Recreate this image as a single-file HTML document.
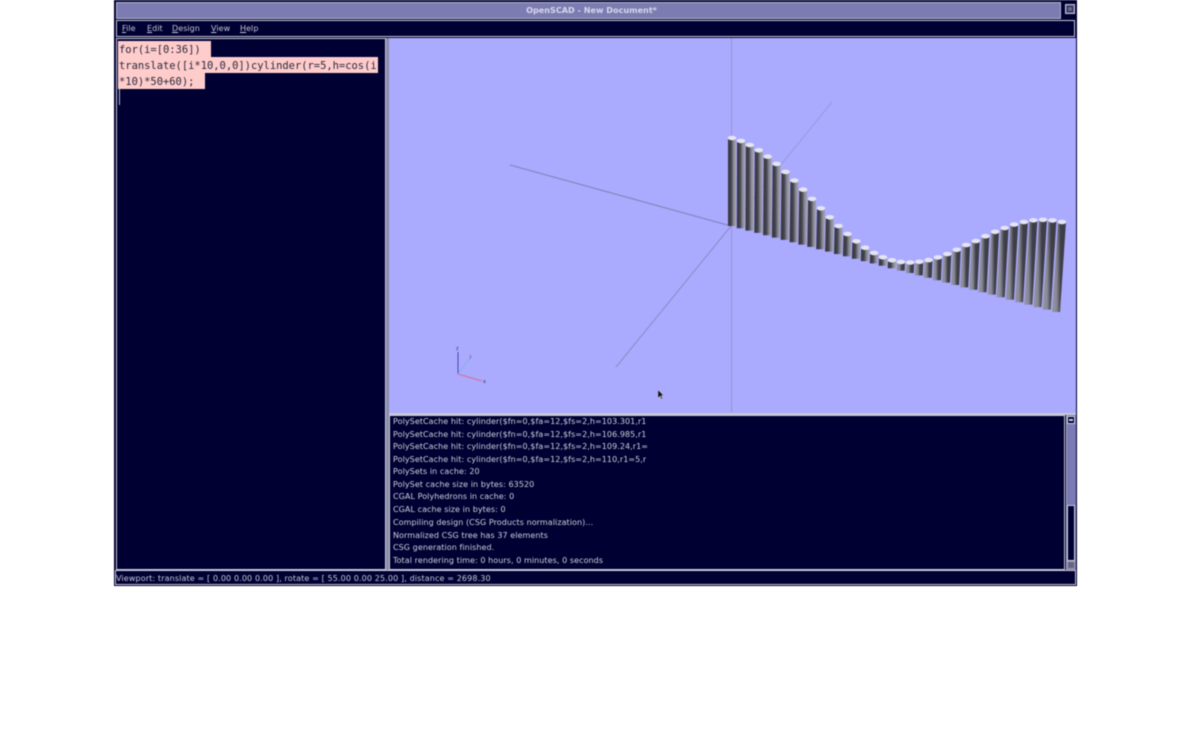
<!DOCTYPE html>
<html><head><meta charset="utf-8"><style>
html,body{margin:0;padding:0;background:#fff;width:1190px;height:732px;overflow:hidden}
#w{position:absolute;left:0;top:0;width:1190px;height:732px;filter:blur(.6px)}
#w div{position:absolute;box-sizing:border-box;white-space:nowrap}
.b{background:#000033;border:1px solid #c8c8d8}
.c{left:393px;font:8px/12px "DejaVu Sans",sans-serif;color:#d0d0dc;letter-spacing:.07px;margin-top:1px}
.m{top:23px;font:8px/12px "DejaVu Sans",sans-serif;color:#c4c4d4;letter-spacing:.05px}
.m u{text-decoration:underline}
.e{left:118px;font:10.45px/18px "DejaVu Sans Mono",monospace;color:#2a2a3a;background:#ffcccc;padding-left:1px;overflow:hidden}
</style></head><body><div id="w">
<div style="left:114px;top:0;width:963px;height:586px;background:#000033"></div>
<div style="left:116px;top:2px;width:945px;height:17px;background:#7c7cb2;border:1px solid #b4b4cc"></div>
<div style="left:119px;top:4px;width:945px;text-align:center;font:bold 8.1px/13px 'DejaVu Sans',sans-serif;color:#d8d8ea">OpenSCAD - New Document*</div>
<div style="left:1065px;top:4px;width:10px;height:10px;background:#6c6c90;border:1px solid #c0c0d4"></div>
<div style="left:1067px;top:6px;width:6px;height:6px;border:1px solid #20204a"></div>
<div class="b" style="left:116px;top:20px;width:959px;height:17px"></div>
<div class="m" style="left:122px"><u>F</u>ile</div>
<div class="m" style="left:147px"><u>E</u>dit</div>
<div class="m" style="left:172px"><u>D</u>esign</div>
<div class="m" style="left:211px"><u>V</u>iew</div>
<div class="m" style="left:240px"><u>H</u>elp</div>
<div class="b" style="left:116px;top:38px;width:270px;height:532px"></div>
<div class="e" style="top:41px;width:93px;height:16px">for(i=[0:36])</div>
<div class="e" style="top:57px;width:260px;height:16px">translate([i*10,0,0])cylinder(r=5,h=cos(i</div>
<div class="e" style="top:73px;width:87px;height:16px">*10)*50+60);</div>
<div style="left:119px;top:89px;width:1px;height:16px;background:#b8b8cc"></div>
<div style="left:386px;top:38px;width:3px;height:532px;background:#8c8ca8"></div>
<div style="left:389px;top:38px;width:687px;height:375px;background:#aaaaff"></div>
<svg style="position:absolute;left:0;top:0" width="1190" height="732" viewBox="0 0 1190 732">
<defs>
<linearGradient id="g"><stop offset="0" stop-color="#34343e"/><stop offset=".4" stop-color="#44444e"/><stop offset=".72" stop-color="#8e8e9a"/><stop offset="1" stop-color="#a0a0b0"/></linearGradient>
<linearGradient id="h"><stop offset="0" stop-color="#9494a6"/><stop offset=".32" stop-color="#8a8a96"/><stop offset=".62" stop-color="#3e3e48"/><stop offset="1" stop-color="#3e3e4a"/></linearGradient>
</defs>
<g stroke-width="1" fill="none">
<line x1="731.5" y1="38" x2="731.5" y2="412" stroke="#9494c8"/>
<line x1="510" y1="165" x2="731" y2="226" stroke="#8282b4"/>
<line x1="731" y1="226" x2="832" y2="102" stroke="#9a9adc"/>
<line x1="731" y1="226" x2="616" y2="367" stroke="#8c8cc4"/>
<line x1="458" y1="352" x2="458" y2="374" stroke="#4848b0"/>
<line x1="458" y1="374" x2="470" y2="358" stroke="#80b4dc"/>
<line x1="458" y1="374" x2="482" y2="381" stroke="#d86c90"/>
</g>
<text x="456" y="350" font-family="DejaVu Sans" font-size="5" fill="#333366">z</text>
<text x="469" y="358" font-family="DejaVu Sans" font-size="5" fill="#6666a0">y</text>
<text x="483" y="383" font-family="DejaVu Sans" font-size="5" fill="#333366">x</text>
<path d="M658 390v8l2-2 1.5 3 1-.5-1.5-3h2.500z" fill="#111" stroke="#ddd" stroke-width=".3"/>
<g fill="url(#g)">
<polygon points="728,138 736,138 736,226 728,226"/>
<polygon points="737,140.900 745,140.900 744.800,228.300 736.800,228.300"/>
<polygon points="745.800,145 753.800,145 753.500,230.600 745.500,230.600"/>
<polygon points="754.800,150.300 762.800,150.300 762.300,232.900 754.300,232.900"/>
<polygon points="763.700,156.600 771.700,156.600 771.100,235.200 763.100,235.200"/>
<polygon points="772.600,163.900 780.600,163.900 779.900,237.600 771.900,237.600"/>
<polygon points="781.500,171.900 789.500,171.900 788.700,239.900 780.700,239.900"/>
<polygon points="790.400,180.500 798.400,180.500 797.600,242.200 789.600,242.200"/>
<polygon points="799.200,189.600 807.200,189.600 806.400,244.600 798.400,244.600"/>
<polygon points="808.100,198.900 816.100,198.900 815.300,246.900 807.300,246.900"/>
<polygon points="817,208.300 825,208.300 824.200,249.300 816.200,249.300"/>
<polygon points="825.800,217.300 833.800,217.300 833.100,251.600 825.100,251.600"/>
<polygon points="834.600,226 842.600,226 842,254 834,254"/>
<polygon points="843.500,234 851.500,234 850.900,256.300 842.900,256.300"/>
<polygon points="852.400,241.300 860.400,241.300 859.900,258.700 851.900,258.700"/>
<polygon points="861.200,247.700 869.200,247.700 868.800,261.100 860.800,261.100"/>
<polygon points="870.100,253 878.100,253 877.800,263.400 869.800,263.400"/>
<polygon points="879,257.200 887,257.200 886.700,265.800 878.700,265.800"/>
<polygon points="888,260.200 896,260.200 895.700,268.200 887.700,268.200"/>
</g>
<g fill="url(#h)">
<polygon points="897,262 905,262 904.700,270.600 896.700,270.600"/>
<polygon points="906.200,262.500 914.200,262.500 913.800,273 905.800,273"/>
<polygon points="915.300,261.800 923.300,261.800 922.800,275.400 914.800,275.400"/>
<polygon points="924.500,260.100 932.500,260.100 931.800,277.800 923.800,277.800"/>
<polygon points="933.900,257.400 941.900,257.400 940.900,280.200 932.900,280.200"/>
<polygon points="943.300,254 951.300,254 950,282.600 942,282.600"/>
<polygon points="952.700,249.800 960.700,249.800 959.100,285 951.100,285"/>
<polygon points="962.200,245 970.200,245 968.200,287.400 960.200,287.400"/>
<polygon points="971.800,241 979.800,241 977.300,289.800 969.300,289.800"/>
<polygon points="981.400,236.200 989.400,236.200 986.500,292.200 978.500,292.200"/>
<polygon points="991.100,231.800 999.100,231.800 995.700,294.600 987.700,294.600"/>
<polygon points="1000.600,228 1008.600,228 1004.700,297.300 996.700,297.300"/>
<polygon points="1010.200,224.500 1018.200,224.500 1013.900,299.700 1005.900,299.700"/>
<polygon points="1019.900,222 1027.900,222 1023.100,302.200 1015.100,302.200"/>
<polygon points="1029.400,220.300 1037.400,220.300 1032.300,304.600 1024.300,304.600"/>
<polygon points="1039,219.800 1047,219.800 1041.500,307.100 1033.500,307.100"/>
<polygon points="1048.500,220.400 1056.500,220.400 1050.700,309.600 1042.700,309.600"/>
<polygon points="1058,222 1066,222 1060,312 1052,312"/>
</g>
<g fill="#e4e4f4">
<ellipse cx="732" cy="138" rx="4.300" ry="2.300"/><ellipse cx="741" cy="140.900" rx="4.300" ry="2.300"/><ellipse cx="749.800" cy="145" rx="4.300" ry="2.300"/><ellipse cx="758.800" cy="150.300" rx="4.300" ry="2.300"/><ellipse cx="767.700" cy="156.600" rx="4.300" ry="2.300"/><ellipse cx="776.600" cy="163.900" rx="4.300" ry="2.300"/><ellipse cx="785.500" cy="171.900" rx="4.300" ry="2.300"/><ellipse cx="794.400" cy="180.500" rx="4.300" ry="2.300"/><ellipse cx="803.200" cy="189.600" rx="4.300" ry="2.300"/><ellipse cx="812.100" cy="198.900" rx="4.300" ry="2.300"/><ellipse cx="821" cy="208.300" rx="4.300" ry="2.300"/><ellipse cx="829.800" cy="217.300" rx="4.300" ry="2.300"/><ellipse cx="838.600" cy="226" rx="4.300" ry="2.300"/><ellipse cx="847.500" cy="234" rx="4.300" ry="2.300"/><ellipse cx="856.400" cy="241.300" rx="4.300" ry="2.300"/><ellipse cx="865.200" cy="247.700" rx="4.300" ry="2.300"/><ellipse cx="874.100" cy="253" rx="4.300" ry="2.300"/><ellipse cx="883" cy="257.200" rx="4.300" ry="2.300"/><ellipse cx="892" cy="260.200" rx="4.300" ry="2.300"/><ellipse cx="901" cy="262" rx="4.300" ry="2.300"/><ellipse cx="910.200" cy="262.500" rx="4.300" ry="2.300"/><ellipse cx="919.300" cy="261.800" rx="4.300" ry="2.300"/><ellipse cx="928.500" cy="260.100" rx="4.300" ry="2.300"/><ellipse cx="937.900" cy="257.400" rx="4.300" ry="2.300"/><ellipse cx="947.300" cy="254" rx="4.300" ry="2.300"/><ellipse cx="956.700" cy="249.800" rx="4.300" ry="2.300"/><ellipse cx="966.200" cy="245" rx="4.300" ry="2.300"/><ellipse cx="975.800" cy="241" rx="4.300" ry="2.300"/><ellipse cx="985.400" cy="236.200" rx="4.300" ry="2.300"/><ellipse cx="995.100" cy="231.800" rx="4.300" ry="2.300"/><ellipse cx="1004.600" cy="228" rx="4.300" ry="2.300"/><ellipse cx="1014.200" cy="224.500" rx="4.300" ry="2.300"/><ellipse cx="1023.900" cy="222" rx="4.300" ry="2.300"/><ellipse cx="1033.400" cy="220.300" rx="4.300" ry="2.300"/><ellipse cx="1043" cy="219.800" rx="4.300" ry="2.300"/><ellipse cx="1052.500" cy="220.400" rx="4.300" ry="2.300"/><ellipse cx="1062" cy="222" rx="4.300" ry="2.300"/>
</g>
</svg>
<div style="left:389px;top:413px;width:687px;height:2px;background:#c8c8d8"></div>
<div class="b" style="left:389px;top:415px;width:676px;height:155px"></div>
<div class="c" style="top:415px">PolySetCache hit: cylinder($fn=0,$fa=12,$fs=2,h=103.301,r1</div>
<div class="c" style="top:428px">PolySetCache hit: cylinder($fn=0,$fa=12,$fs=2,h=106.985,r1</div>
<div class="c" style="top:440px">PolySetCache hit: cylinder($fn=0,$fa=12,$fs=2,h=109.24,r1=</div>
<div class="c" style="top:453px">PolySetCache hit: cylinder($fn=0,$fa=12,$fs=2,h=110,r1=5,r</div>
<div class="c" style="top:465px">PolySets in cache: 20</div>
<div class="c" style="top:478px">PolySet cache size in bytes: 63520</div>
<div class="c" style="top:490px">CGAL Polyhedrons in cache: 0</div>
<div class="c" style="top:503px">CGAL cache size in bytes: 0</div>
<div class="c" style="top:516px">Compiling design (CSG Products normalization)...</div>
<div class="c" style="top:529px">Normalized CSG tree has 37 elements</div>
<div class="c" style="top:541px">CSG generation finished.</div>
<div class="c" style="top:554px">Total rendering time: 0 hours, 0 minutes, 0 seconds</div>
<div style="left:1066px;top:415px;width:10px;height:155px;background:#7a7ab4;border-left:1px solid #a8a8c4"></div>
<div style="left:1067px;top:505px;width:8px;height:56px;background:#000033;border:1px solid #c8c8dc"></div>
<div style="left:1067px;top:416px;width:8px;height:8px;background:#000033;border:1px solid #c8c8dc"></div>
<div style="left:1069px;top:419px;width:4px;height:2px;background:#d0d0e0"></div>
<div style="left:1067px;top:561px;width:8px;height:8px;background:#66667e;border:1px solid #9a9ab0"></div>
<div class="b" style="left:115px;top:570px;width:961px;height:15px"></div>
<div style="left:116px;top:573px;font:8px/12px 'DejaVu Sans',sans-serif;color:#c8c8d8;letter-spacing:.13px">Viewport: translate = [ 0.00 0.00 0.00 ], rotate = [ 55.00 0.00 25.00 ], distance = 2698.30</div>
</div></body></html>
